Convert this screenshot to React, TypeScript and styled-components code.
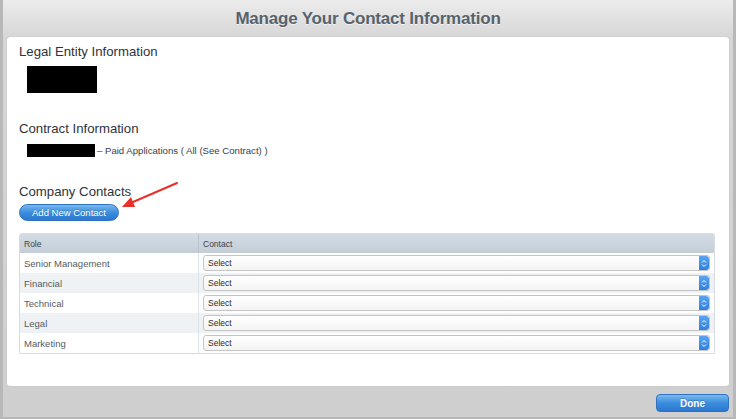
import React from "react";
import styled, { createGlobalStyle } from "styled-components";

const Global = createGlobalStyle`
  html, body { margin: 0; padding: 0; background: #d2d2d2; }
  body { font-family: "Liberation Sans", Arial, sans-serif; }
`;

const Window = styled.div`
  width: 736px;
  height: 419px;
  box-sizing: border-box;
  display: flex;
  flex-direction: column;
  background: linear-gradient(#ececec 0px, #d6d6d6 38px, #cfcfcf 100%);
  border-left: 3px solid #b8b8b8;
  border-right: 3px solid #b8b8b8;
  border-bottom: 2px solid #b8b8b8;
`;

const TitleBar = styled.div`
  height: 37px;
  display: flex;
  align-items: center;
  justify-content: center;
  flex-shrink: 0;
`;

const Title = styled.h1`
  margin: 0;
  font-size: 17px;
  font-weight: bold;
  color: #58626b;
  letter-spacing: -0.2px;
  text-shadow: 0 1px 0 rgba(255, 255, 255, 0.6);
`;

const Panel = styled.div`
  position: relative;
  flex: 1;
  margin: 0 4px;
  background: #fff;
  border-radius: 3px;
  box-shadow: 0 0 1px rgba(0, 0, 0, 0.25);
  padding: 7px 14px 0 12px;
  display: flex;
  flex-direction: column;
`;

const Heading = styled.h2`
  margin: 0;
  font-size: 13.2px;
  font-weight: normal;
  color: #2e3338;
  line-height: 16px;
`;

const Redacted = styled.div<{ $w: number; $h: number }>`
  width: ${(p) => p.$w}px;
  height: ${(p) => p.$h}px;
  background: #000;
  flex-shrink: 0;
`;

const EntityBlock = styled.div`
  padding: 6px 0 0 8px;
  height: 55px;
`;

const ContractRow = styled.div`
  display: flex;
  align-items: center;
  gap: 2px;
  padding: 7px 0 27px 8px;
  height: 13px;
  font-size: 9.6px;
  color: #3b4046;
`;

const Button = styled.button`
  font-family: "Liberation Sans", Arial, sans-serif;
  color: #fff;
  border: 1px solid #2f73c0;
  background: linear-gradient(#7ab8ee, #3b8ddd 50%, #2a78d0);
  font-size: 9.5px;
  cursor: pointer;
  padding: 0;
  text-shadow: 0 -1px 0 rgba(0, 0, 0, 0.2);
`;

const AddButton = styled(Button)`
  display: block;
  width: 100px;
  height: 17px;
  border-radius: 9px;
  margin-top: 4px;
`;

const DoneButton = styled(Button)`
  width: 73px;
  height: 18px;
  border-radius: 4px;
  font-weight: bold;
  font-size: 10px;
`;

const Table = styled.div`
  margin-top: 12px;
  border: 1px solid #d6dce1;
  border-radius: 3px 3px 0 0;
  display: grid;
  grid-template-columns: 178px 1fr;
  font-size: 9.5px;
`;

const HeadCell = styled.div<{ $first?: boolean }>`
  height: 19px;
  display: flex;
  align-items: center;
  padding-left: 4px;
  background: linear-gradient(#d3dce3, #c4ced7);
  color: #3c4248;
  font-size: 8.5px;
  border-left: ${(p) => (p.$first ? "none" : "1px solid #b9c3cb")};
`;

const Cell = styled.div<{ $alt: boolean; $first?: boolean }>`
  height: 20px;
  display: flex;
  align-items: center;
  padding: 0 4px;
  background: ${(p) => (p.$alt ? "#eef2f5" : "#fff")};
  color: #555b60;
  border-left: ${(p) => (p.$first ? "none" : "1px solid #dfe4e8")};
`;

const Select = styled.div`
  flex: 1;
  height: 14px;
  border: 1px solid #c4c4c4;
  border-radius: 3px;
  background: linear-gradient(#fff, #f4f4f4);
  display: flex;
  align-items: center;
  justify-content: space-between;
  font-size: 8.5px;
  color: #2a2a2a;
  padding-left: 4px;
  overflow: hidden;
`;

const SelectArrow = styled.div`
  width: 10px;
  height: 14px;
  background: linear-gradient(#5aa3f0, #2f80e0);
  border-radius: 0 3px 3px 0;
  display: flex;
  align-items: center;
  justify-content: center;
`;

const Footer = styled.div`
  height: 31px;
  flex-shrink: 0;
  display: flex;
  align-items: center;
  justify-content: flex-end;
  padding: 3px 4px 0 0;
  box-sizing: border-box;
`;

const Arrow = styled.svg`
  position: absolute;
  left: 112px;
  top: 141px;
`;

const roles = ["Senior Management", "Financial", "Technical", "Legal", "Marketing"];

export default function App() {
  return (
    <>
      <Global />
      <Window>
        <TitleBar>
          <Title>Manage Your Contact Information</Title>
        </TitleBar>
        <Panel>
          <Heading>Legal Entity Information</Heading>
          <EntityBlock>
            <Redacted $w={70} $h={27} />
          </EntityBlock>
          <Heading>Contract Information</Heading>
          <ContractRow>
            <Redacted $w={68} $h={13} />
            <span>– Paid Applications ( All (See Contract) )</span>
          </ContractRow>
          <Heading>Company Contacts</Heading>
          <AddButton>Add New Contact</AddButton>
          <Table>
            <HeadCell $first>Role</HeadCell>
            <HeadCell>Contact</HeadCell>
            {roles.map((r, i) => (
              <React.Fragment key={r}>
                <Cell $alt={i % 2 === 1} $first>
                  {r}
                </Cell>
                <Cell $alt={i % 2 === 1}>
                  <Select>
                    <span>Select</span>
                    <SelectArrow>
                      <svg width="6" height="9" viewBox="0 0 6 9">
                        <path d="M1 3.5 L3 1.5 L5 3.5 M1 5.5 L3 7.5 L5 5.5" fill="none" stroke="#fff" strokeWidth="1" />
                      </svg>
                    </SelectArrow>
                  </Select>
                </Cell>
              </React.Fragment>
            ))}
          </Table>
          <Arrow width="70" height="40" viewBox="0 0 70 40">
            <line x1="58" y1="5" x2="14" y2="24" stroke="#e8302a" strokeWidth="2" strokeLinecap="round" />
            <polygon points="3,29 16,29 12,19" fill="#e8302a" />
          </Arrow>
        </Panel>
        <Footer>
          <DoneButton>Done</DoneButton>
        </Footer>
      </Window>
    </>
  );
}
